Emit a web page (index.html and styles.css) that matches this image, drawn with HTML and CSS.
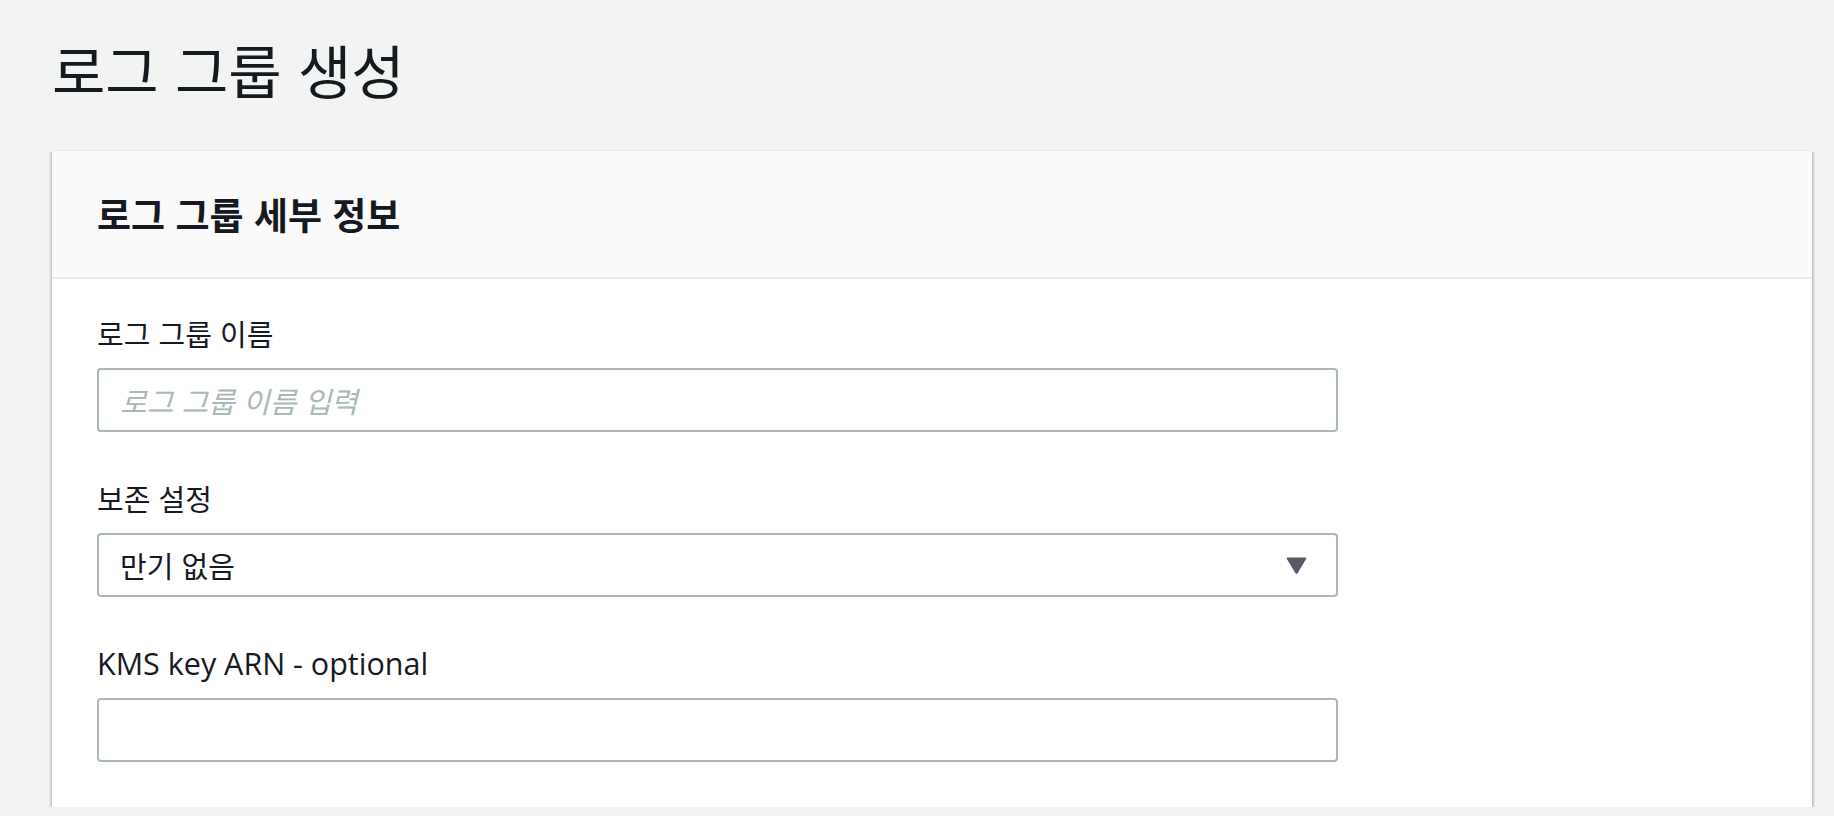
FILE: index.html
```html
<!DOCTYPE html>
<html lang="ko">
<head>
<meta charset="utf-8">
<title>로그 그룹 생성</title>
<link rel="stylesheet" href="styles.css">
</head>
<body>
<main class="page">
  <h1 class="page-title">로그 그룹 생성</h1>
  <section class="card">
    <header class="card-header">
      <h2 class="card-title">로그 그룹 세부 정보</h2>
    </header>
    <div class="card-body">
      <div class="field">
        <label class="field-label">로그 그룹 이름</label>
        <div class="control"><span class="placeholder">로그 그룹 이름 입력</span></div>
      </div>
      <div class="field">
        <label class="field-label">보존 설정</label>
        <div class="control select">
          <span class="value">만기 없음</span>
          <svg class="caret" width="23" height="19" viewBox="0 0 23 19"><path d="M2.6 1.5 H20.4 Q22 1.5 21.1 3 L12.7 17 Q11.5 18.7 10.3 17 L1.9 3 Q1 1.5 2.6 1.5 Z" fill="#545b64"/></svg>
        </div>
      </div>
      <div class="field">
        <label class="field-label latin">KMS key ARN - optional</label>
        <div class="control"></div>
      </div>
    </div>
  </section>
</main>
</body>
</html>
```
FILE: styles.css
```css
html, body {
  margin: 0;
  padding: 0;
  background: #f2f3f3;
}
body {
  font-family: "Noto Sans CJK KR", "Open Sans", sans-serif;
  color: #16191f;
}
.page {
  padding: 33px 22px 0 52px;
  display: flex;
  flex-direction: column;
}
.page-title {
  margin: 0 0 45px 0;
  font-size: 58px;
  line-height: 72px;
  font-weight: 400;
  color: #16191f;
}
.card {
  background: #fff;
  border-top: 1px solid #eaeded;
  box-shadow: 0 2px 2px 0 rgba(0, 28, 36, 0.3), 2px 2px 2px 0 rgba(0, 28, 36, 0.15), -2px 2px 2px 0 rgba(0, 28, 36, 0.12);
}
.card-header {
  height: 126px;
  display: flex;
  align-items: center;
  padding: 0 45px;
  background: #fafafa;
  border-bottom: 2px solid #eaeded;
}
.card-title {
  margin: 0;
  font-size: 37px;
  font-weight: 700;
  line-height: 48px;
}
.card-body {
  padding: 34px 45px 45px 45px;
  display: flex;
  flex-direction: column;
  gap: 46px;
}
.field {
  display: flex;
  flex-direction: column;
  gap: 15px;
}
.field-label {
  font-size: 29px;
  line-height: 40px;
  height: 40px;
  color: #16191f;
}
.latin {
  font-family: "Open Sans", "Noto Sans CJK KR", sans-serif;
  font-size: 30.5px;
}
.control {
  width: 1241px;
  height: 64px;
  box-sizing: border-box;
  border: 2px solid #aab7b8;
  border-radius: 4px;
  background: #fff;
  display: flex;
  align-items: center;
  padding: 0 28px 0 21px;
  font-size: 29px;
}
.placeholder {
  color: #aab7b8;
  font-style: italic;
}
.select {
  justify-content: space-between;
}
.value {
  color: #16191f;
}
.caret {
  display: block;
}
```
